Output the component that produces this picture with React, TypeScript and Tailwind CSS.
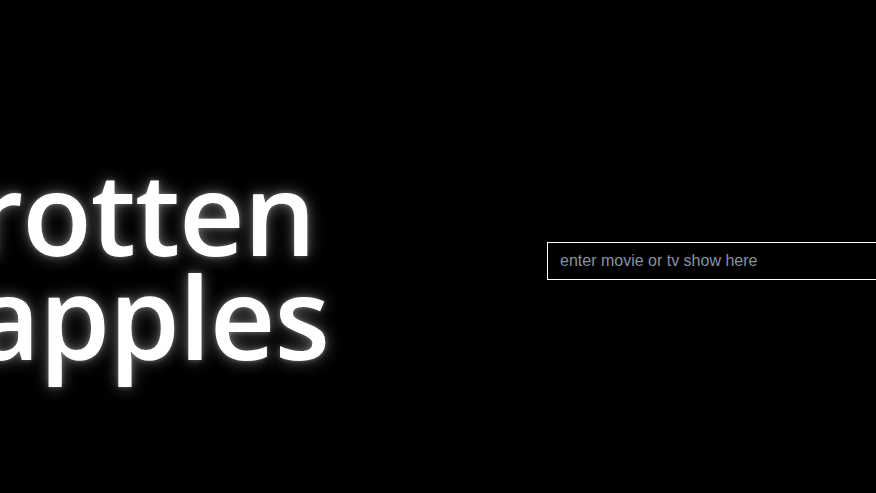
export default function App() {
  return (
    <div className="flex h-[493px] w-full items-center overflow-hidden bg-black pt-[29px]">
      <div className="w-[547px] shrink-0">
        <h1
          className="ml-[-26px] mt-[5px] whitespace-nowrap text-[114px] font-semibold leading-[104px] tracking-[-1px] text-white"
          style={{
            fontFamily: '"Open Sans", "Noto Sans", sans-serif',
            textShadow: "0 0 16px rgba(255,255,255,0.4), 0 0 5px rgba(255,255,255,0.3)",
          }}
        >
          rotten
          <br />
          apples
        </h1>
      </div>
      <input
        type="text"
        placeholder="enter movie or tv show here"
        className="h-[38px] w-[340px] shrink-0 border border-white bg-black px-3 text-[16px] text-white outline-none placeholder:text-[#8393a4]"
        style={{ fontFamily: '"Liberation Sans", Arial, sans-serif' }}
      />
    </div>
  );
}
